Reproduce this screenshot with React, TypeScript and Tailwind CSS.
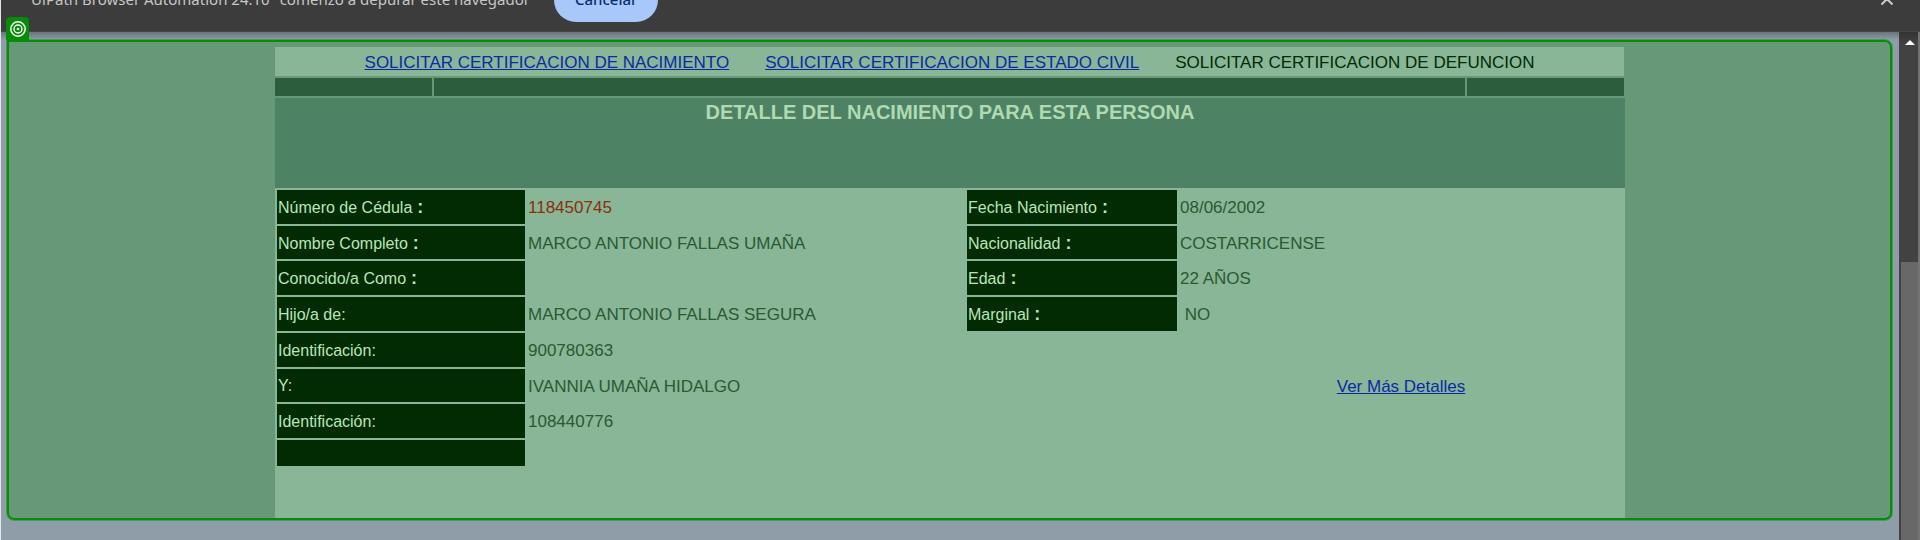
import React from "react";

type Field = { label: string; value: string; colon?: boolean; accent?: boolean };
type Row = { left: Field; right?: Field; height: string; link?: boolean };

const rows: Row[] = [
  { height: "h-[34px]", left: { label: "Número de Cédula", colon: true, value: "118450745", accent: true }, right: { label: "Fecha Nacimiento", colon: true, value: "08/06/2002" } },
  { height: "h-[33px]", left: { label: "Nombre Completo", colon: true, value: "MARCO ANTONIO FALLAS UMAÑA" }, right: { label: "Nacionalidad", colon: true, value: "COSTARRICENSE" } },
  { height: "h-[34px]", left: { label: "Conocido/a Como", colon: true, value: "" }, right: { label: "Edad", colon: true, value: "22 AÑOS" } },
  { height: "h-[34px]", left: { label: "Hijo/a de:", value: "MARCO ANTONIO FALLAS SEGURA" }, right: { label: "Marginal", colon: true, value: "\u00a0NO" } },
  { height: "h-[34px]", left: { label: "Identificación:", value: "900780363" } },
  { height: "h-[33px]", left: { label: "Y:", value: "IVANNIA UMAÑA HIDALGO" }, link: true },
  { height: "h-[34px]", left: { label: "Identificación:", value: "108440776" } },
  { height: "h-[26px]", left: { label: "", value: "" } },
];

function Label({ field }: { field: Field }) {
  return (
    <th scope="row" className="bg-[#032b03] px-px pt-px pb-0 text-left align-middle font-normal text-[#b9e6b9]">
      {field.label}
      {field.colon && <span className="text-lg leading-5 font-bold"> :</span>}
    </th>
  );
}

function Value({ field }: { field: Field }) {
  return (
    <td
      className={
        field.accent
          ? "px-px pt-0.5 pb-0 align-middle text-[17px] text-[#8a2f0c]"
          : "px-px pt-0.5 pb-0 align-middle text-[17px] text-[#2a5a33]"
      }
    >
      {field.value}
    </td>
  );
}

function DebugBar() {
  return (
    <header className="flex h-8 items-end justify-between overflow-hidden border-b border-[#474747] bg-[#3c3c3c] pr-[26px] pl-6 font-['Noto_Sans','Open_Sans',sans-serif] text-[15px]">
      <div className="flex items-end gap-6 pb-[9px]">
        <p className="pb-[11px] leading-6 text-[#c7c7c7]">"UiPath Browser Automation 24.10" comenzó a depurar este navegador</p>
        <button type="button" className="h-11 rounded-full bg-[#a8c7fa] px-[21px] pb-0.5 leading-6 font-medium text-[#062e6f]">Cancelar</button>
      </div>
      <button type="button" aria-label="Cerrar" className="pb-[25px] text-[#d0d0d0]">
        <svg width="14" height="14" viewBox="0 0 14 14" fill="none" stroke="currentColor" strokeWidth="2">
          <path d="M1.500 1.500 L12.500 12.500 M12.500 1.500 L1.500 12.500" />
        </svg>
      </button>
    </header>
  );
}

function Scrollbar() {
  return (
    <div className="flex w-[21px] flex-col border-r-2 border-[#747474] bg-[#424242]">
      <div className="h-[230px] bg-linear-to-b from-[#333333] via-[#424242] via-5% to-[#424242] pt-2 pl-1.5">
        <svg width="10" height="5" viewBox="0 0 10 5" fill="#ffffff">
          <path d="M5 0 L10 5 H0 Z" />
        </svg>
      </div>
      <div className="ml-0.5 flex-1 bg-[#686868]" />
    </div>
  );
}

export default function App() {
  return (
    <div className="flex min-h-screen flex-col border-l border-[#e4e7ea] bg-[#8f9da9] font-['Liberation_Sans',Arial,sans-serif] text-base leading-5">
      <DebugBar />
      <div className="flex flex-1">
        <main className="flex-1 bg-linear-to-b from-[#69747d] to-[#8f9da9] to-[8px] pt-[7px] pr-1.5 pb-5 pl-[5px]">
          <div className="relative rounded-lg rounded-tl-none border border-[#4d9a58]">
            <div className="absolute -top-[23px] -left-px flex size-[23px] items-center justify-center rounded-t-[4px] bg-[#058c09]">
              <svg width="16" height="16" viewBox="0 0 16 16" fill="none" stroke="#ffffff">
                <circle cx="8" cy="8" r="7.200" strokeWidth="1.500" />
                <circle cx="8" cy="8" r="4" strokeWidth="1.400" />
                <circle cx="8" cy="8" r="1.300" fill="#ffffff" stroke="none" />
              </svg>
            </div>
            <div className="rounded-[7px] rounded-tl-none border-2 border-[#058c09] bg-[#679878] pt-[5px] pl-px">
              <div className="mx-auto max-w-[1350px]">
                <nav className="mr-px mb-0.5 flex h-[29px] items-center justify-center gap-9 bg-[#88b696] pt-0.5 text-[17px] text-[#032b03]">
                  <a href="#nacimiento" className="text-[#0a2ba8] underline">SOLICITAR CERTIFICACION DE NACIMIENTO</a>
                  <a href="#estado-civil" className="text-[#0a2ba8] underline">SOLICITAR CERTIFICACION DE ESTADO CIVIL</a>
                  <span>SOLICITAR CERTIFICACION DE DEFUNCION</span>
                </nav>
                <div className="mr-px mb-0.5 flex h-[18px] gap-0.5">
                  <div className="w-[157px] bg-[#2c5e3d]" />
                  <div className="flex-1 bg-[#2c5e3d]" />
                  <div className="w-[157px] bg-[#2c5e3d]" />
                </div>
                <h1 className="h-[90px] bg-[#4d8264] pt-0.5 text-center text-xl leading-6 font-bold text-[#b0dab0]">
                  DETALLE DEL NACIMIENTO PARA ESTA PERSONA
                </h1>
                <div className="bg-[#88b696] pb-[50px]">
                  <table className="w-full table-fixed border-separate border-spacing-0.5">
                    <colgroup>
                      <col className="w-[248px]" />
                      <col />
                      <col className="w-[210px]" />
                      <col className="w-[444px]" />
                    </colgroup>
                    <tbody>
                      {rows.map((row, i) => (
                        <tr key={i} className={row.height}>
                          <Label field={row.left} />
                          <Value field={row.left} />
                          {row.right ? <Label field={row.right} /> : <td className="p-0" />}
                          {row.right ? (
                            <Value field={row.right} />
                          ) : (
                            <td className="px-0 pt-0.5 pb-0 text-center text-[17px]">
                              {row.link && <a href="#detalles" className="text-[#0a2ba8] underline">Ver Más Detalles</a>}
                            </td>
                          )}
                        </tr>
                      ))}
                    </tbody>
                  </table>
                </div>
              </div>
            </div>
          </div>
        </main>
        <Scrollbar />
      </div>
    </div>
  );
}
